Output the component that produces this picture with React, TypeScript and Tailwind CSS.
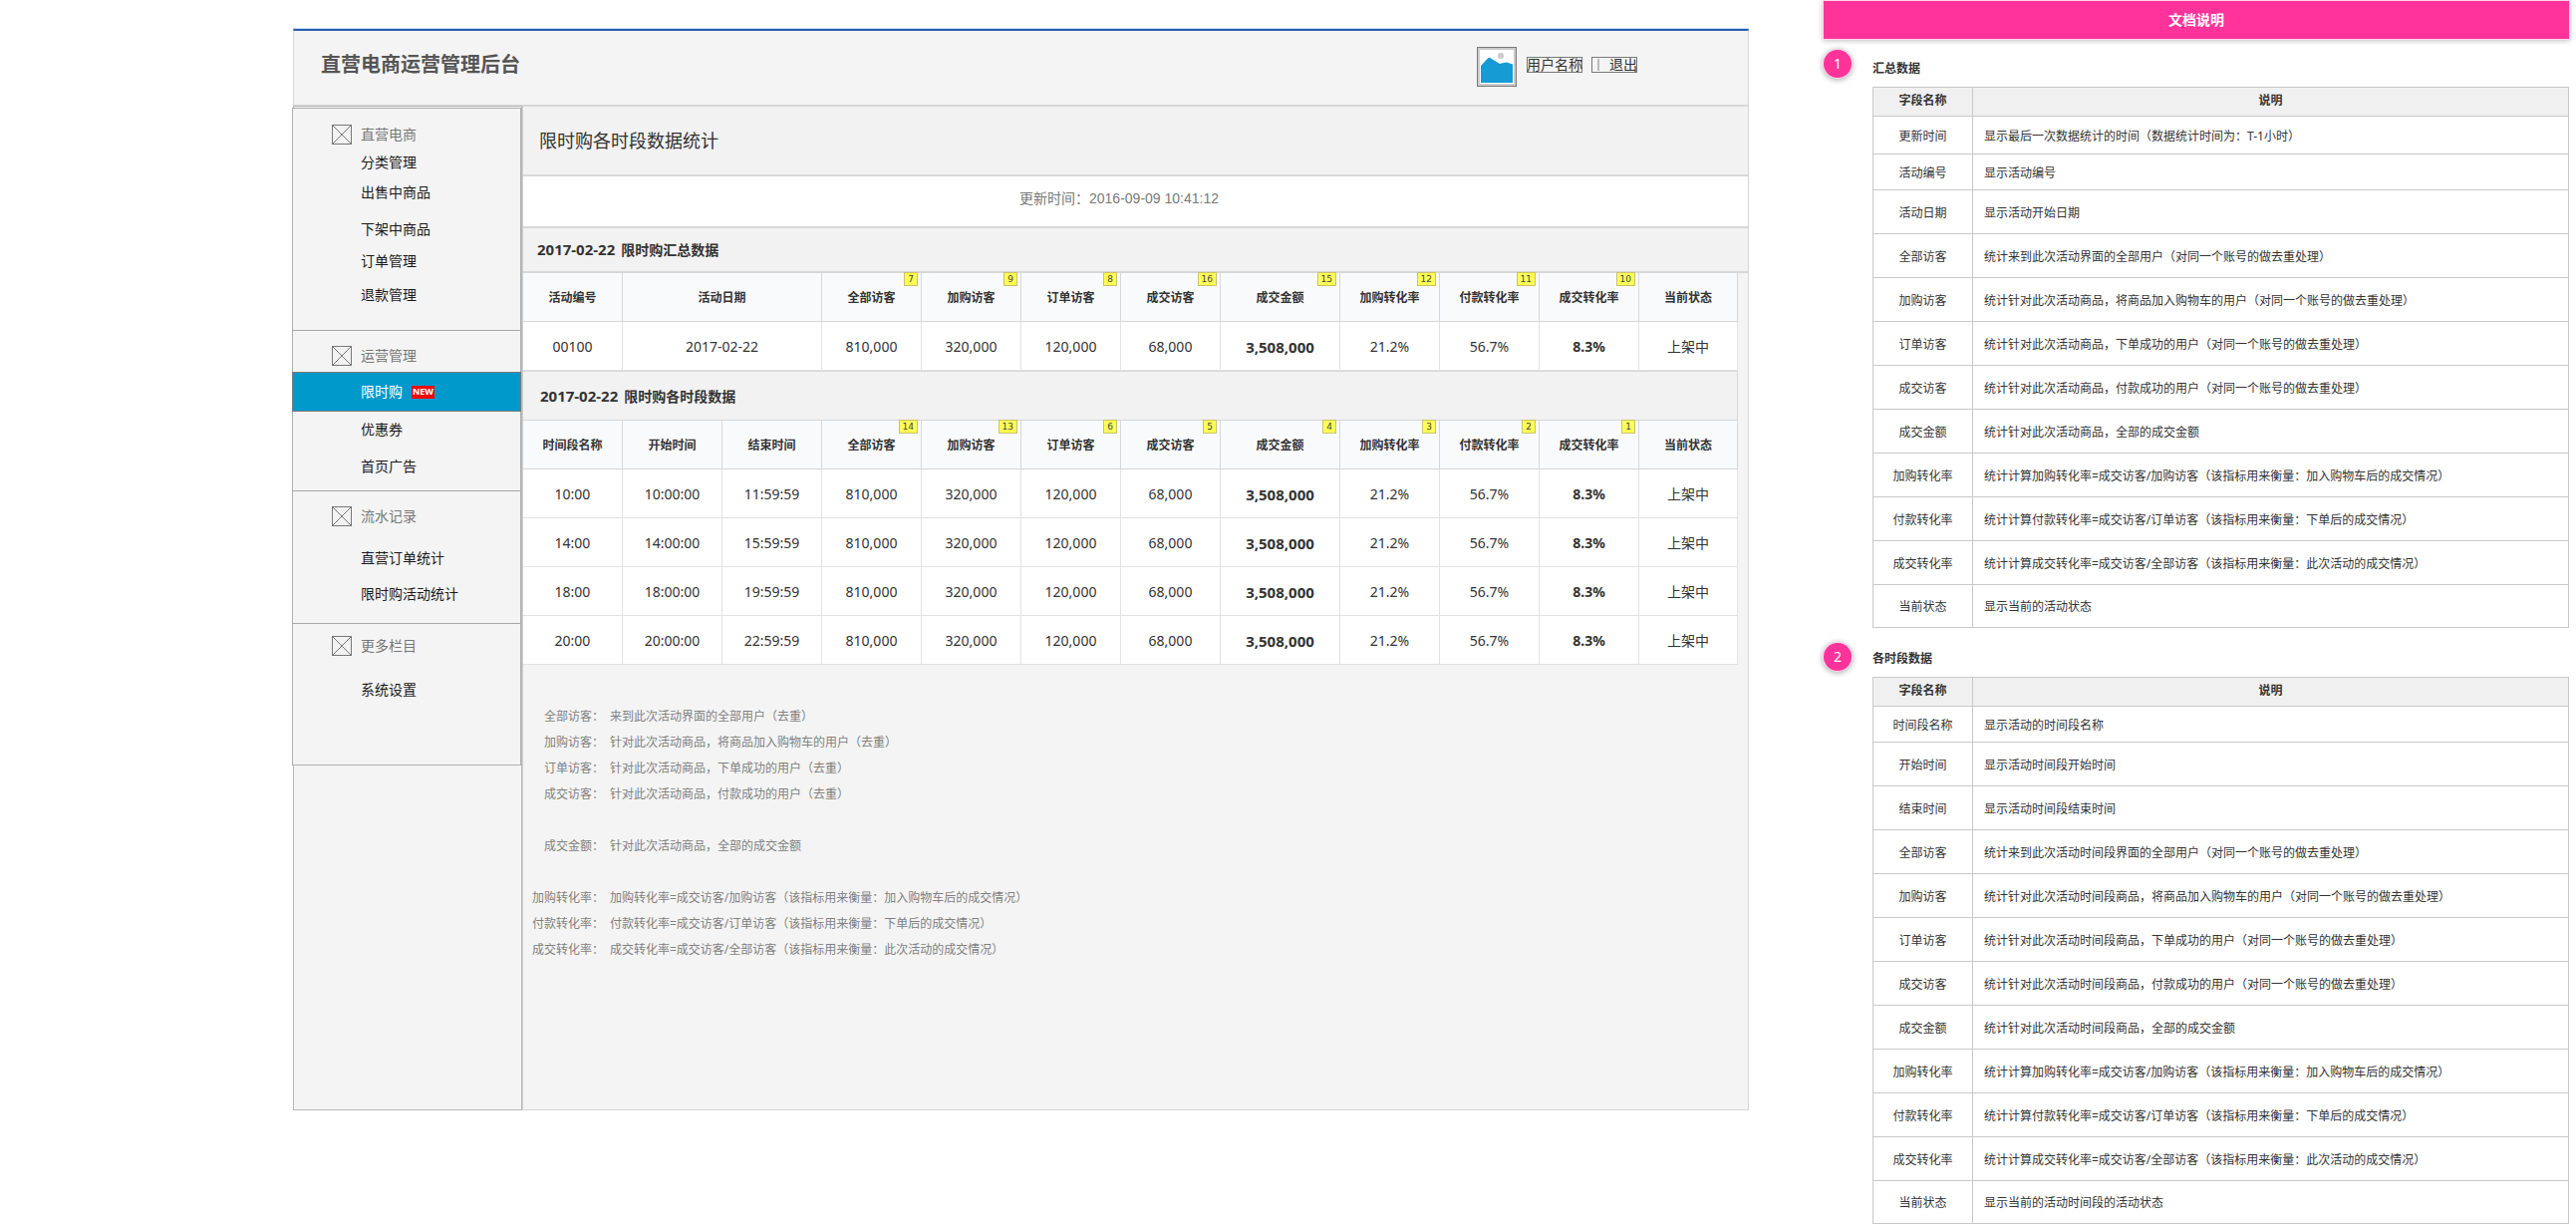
import React from 'react';

type MenuItem = { label: string; className: string; active?: boolean };
type MenuGroup = { title: string; className: string; items: MenuItem[] };

const MENU: MenuGroup[] = [
  {
    title: '直营电商',
    className: 'pt-4 pb-[25px]',
    items: [
      { label: '分类管理', className: 'mt-2' },
      { label: '出售中商品', className: 'mt-2.5' },
      { label: '下架中商品', className: 'mt-[17px]' },
      { label: '订单管理', className: 'mt-3' },
      { label: '退款管理', className: 'mt-3.5' },
    ],
  },
  {
    title: '运营管理',
    className: 'pt-[15px] pb-3.5',
    items: [
      { label: '限时购', className: 'mt-1.5', active: true },
      { label: '优惠券', className: 'mt-2' },
      { label: '首页广告', className: 'mt-[17px]' },
    ],
  },
  {
    title: '流水记录',
    className: 'pt-[15px] pb-[19px]',
    items: [
      { label: '直营订单统计', className: 'mt-[22px]' },
      { label: '限时购活动统计', className: 'mt-4' },
    ],
  },
  {
    title: '更多栏目',
    className: 'pt-3 pb-[65px]',
    items: [{ label: '系统设置', className: 'mt-6' }],
  },
];

type Column = { label: string; note?: number; width: number };

const SUMMARY_COLUMNS: Column[] = [
  { label: '活动编号', width: 100 },
  { label: '活动日期', width: 200 },
  { label: '全部访客', note: 7, width: 100 },
  { label: '加购访客', note: 9, width: 100 },
  { label: '订单访客', note: 8, width: 100 },
  { label: '成交访客', note: 16, width: 100 },
  { label: '成交金额', note: 15, width: 120 },
  { label: '加购转化率', note: 12, width: 100 },
  { label: '付款转化率', note: 11, width: 100 },
  { label: '成交转化率', note: 10, width: 100 },
  { label: '当前状态', width: 99 },
];

const PERIOD_COLUMNS: Column[] = [
  { label: '时间段名称', width: 100 },
  { label: '开始时间', width: 100 },
  { label: '结束时间', width: 100 },
  { label: '全部访客', note: 14, width: 100 },
  { label: '加购访客', note: 13, width: 100 },
  { label: '订单访客', note: 6, width: 100 },
  { label: '成交访客', note: 5, width: 100 },
  { label: '成交金额', note: 4, width: 120 },
  { label: '加购转化率', note: 3, width: 100 },
  { label: '付款转化率', note: 2, width: 100 },
  { label: '成交转化率', note: 1, width: 100 },
  { label: '当前状态', width: 99 },
];

const METRICS = ['810,000', '320,000', '120,000', '68,000', '3,508,000', '21.2%', '56.7%', '8.3%', '上架中'];

const SUMMARY_ROWS = [['00100', '2017-02-22', ...METRICS]];

const PERIOD_ROWS = [
  ['10:00', '10:00:00', '11:59:59', ...METRICS],
  ['14:00', '14:00:00', '15:59:59', ...METRICS],
  ['18:00', '18:00:00', '19:59:59', ...METRICS],
  ['20:00', '20:00:00', '22:59:59', ...METRICS],
];

const NOTES: [string, string][][] = [
  [
    ['全部访客：', '来到此次活动界面的全部用户（去重）'],
    ['加购访客：', '针对此次活动商品，将商品加入购物车的用户（去重）'],
    ['订单访客：', '针对此次活动商品，下单成功的用户（去重）'],
    ['成交访客：', '针对此次活动商品，付款成功的用户（去重）'],
  ],
  [['成交金额：', '针对此次活动商品，全部的成交金额']],
  [
    ['加购转化率：', '加购转化率=成交访客/加购访客（该指标用来衡量：加入购物车后的成交情况）'],
    ['付款转化率：', '付款转化率=成交访客/订单访客（该指标用来衡量：下单后的成交情况）'],
    ['成交转化率：', '成交转化率=成交访客/全部访客（该指标用来衡量：此次活动的成交情况）'],
  ],
];

type DocRow = { name: string; text: string; height: string };

const H36 = 'h-9';
const H38 = 'h-[38px]';
const H44 = 'h-11';
const H43 = 'h-[43px]';

const DOC_SUMMARY: DocRow[] = [
  { name: '更新时间', text: '显示最后一次数据统计的时间（数据统计时间为：T-1小时）', height: H38 },
  { name: '活动编号', text: '显示活动编号', height: H36 },
  { name: '活动日期', text: '显示活动开始日期', height: H44 },
  { name: '全部访客', text: '统计来到此次活动界面的全部用户（对同一个账号的做去重处理）', height: H44 },
  { name: '加购访客', text: '统计针对此次活动商品，将商品加入购物车的用户（对同一个账号的做去重处理）', height: H44 },
  { name: '订单访客', text: '统计针对此次活动商品，下单成功的用户（对同一个账号的做去重处理）', height: H44 },
  { name: '成交访客', text: '统计针对此次活动商品，付款成功的用户（对同一个账号的做去重处理）', height: H44 },
  { name: '成交金额', text: '统计针对此次活动商品，全部的成交金额', height: H44 },
  { name: '加购转化率', text: '统计计算加购转化率=成交访客/加购访客（该指标用来衡量：加入购物车后的成交情况）', height: H44 },
  { name: '付款转化率', text: '统计计算付款转化率=成交访客/订单访客（该指标用来衡量：下单后的成交情况）', height: H44 },
  { name: '成交转化率', text: '统计计算成交转化率=成交访客/全部访客（该指标用来衡量：此次活动的成交情况）', height: H44 },
  { name: '当前状态', text: '显示当前的活动状态', height: H43 },
];

const DOC_PERIOD: DocRow[] = [
  { name: '时间段名称', text: '显示活动的时间段名称', height: H36 },
  { name: '开始时间', text: '显示活动时间段开始时间', height: H44 },
  { name: '结束时间', text: '显示活动时间段结束时间', height: H44 },
  { name: '全部访客', text: '统计来到此次活动时间段界面的全部用户（对同一个账号的做去重处理）', height: H44 },
  { name: '加购访客', text: '统计针对此次活动时间段商品，将商品加入购物车的用户（对同一个账号的做去重处理）', height: H44 },
  { name: '订单访客', text: '统计针对此次活动时间段商品，下单成功的用户（对同一个账号的做去重处理）', height: H44 },
  { name: '成交访客', text: '统计针对此次活动时间段商品，付款成功的用户（对同一个账号的做去重处理）', height: H44 },
  { name: '成交金额', text: '统计针对此次活动时间段商品，全部的成交金额', height: H44 },
  { name: '加购转化率', text: '统计计算加购转化率=成交访客/加购访客（该指标用来衡量：加入购物车后的成交情况）', height: H44 },
  { name: '付款转化率', text: '统计计算付款转化率=成交访客/订单访客（该指标用来衡量：下单后的成交情况）', height: H44 },
  { name: '成交转化率', text: '统计计算成交转化率=成交访客/全部访客（该指标用来衡量：此次活动的成交情况）', height: H44 },
  { name: '当前状态', text: '显示当前的活动时间段的活动状态', height: H43 },
];

function CrossBox() {
  return (
    <svg width="20" height="20" viewBox="0 0 20 20" fill="none" stroke="#797979" className="shrink-0" aria-hidden="true">
      <rect x="0.5" y="0.5" width="19" height="19" fill="#f2f2f2" />
      <path d="M0.5 0.5L19.5 19.5M19.5 0.5L0.5 19.5" />
    </svg>
  );
}

function Avatar() {
  return (
    <svg width="40" height="40" viewBox="0 0 40 40" className="shrink-0" role="img" aria-label="用户头像">
      <rect x="0.5" y="0.5" width="39" height="39" fill="#cccccc" stroke="#797979" />
      <rect x="3" y="3" width="34" height="34" fill="#ffffff" />
      <circle cx="24" cy="9" r="3" fill="#cccccc" />
      <path d="M4 19L11 11.5Q12.5 10 14 11.5L23 17Q27 15.500 30 15.500L36 17.5V36H4Z" fill="#169bd5" />
    </svg>
  );
}

function Sidebar() {
  return (
    <aside className="-mt-px -mb-px -ml-px w-[230px] shrink-0 border border-[#b8b8b8] bg-[#f4f4f4] pt-px">
      <nav className="-ml-0.5 w-[230px] border border-[#b0b0b0] bg-[#f4f4f4]">
        {MENU.map((group, i) => (
          <section key={group.title} className={`${group.className} ${i > 0 ? 'border-t border-[#a6a6a6]' : ''}`}>
            <h2 className="flex h-5 items-center gap-[9px] pl-[39px] text-sm leading-5 text-[#777777]">
              <CrossBox />
              {group.title}
            </h2>
            <ul>
              {group.items.map((item) => (
                <li key={item.label} className={item.className}>
                  {item.active ? (
                    <a
                      href="#"
                      aria-current="page"
                      className="-mx-px flex h-10 items-center gap-[9px] border border-[#797979] bg-[#0099cc] pl-[68px] text-sm text-white"
                    >
                      {item.label}
                      <span className="flex h-[13px] w-[23px] items-center justify-center bg-[#ee0a0a] text-[9px] font-bold">NEW</span>
                    </a>
                  ) : (
                    <a href="#" className="block h-5 pl-[68px] text-sm leading-5 text-[#1a1a1a]">
                      {item.label}
                    </a>
                  )}
                </li>
              ))}
            </ul>
          </section>
        ))}
      </nav>
    </aside>
  );
}

function StatsTable({ label, columns, rows }: { label: string; columns: Column[]; rows: string[][] }) {
  return (
    <table aria-label={label} className="w-full table-fixed border-separate border-spacing-0 text-center text-[#333333]">
      <colgroup>
        {columns.map((c) => (
          <col key={c.label} style={{ width: c.width }} />
        ))}
      </colgroup>
      <thead>
        <tr>
          {columns.map((c) => (
            <th
              key={c.label}
              scope="col"
              className="relative h-[49px] border-r border-b border-[#d7d7d7] bg-[#f9fafc] p-0 pt-0.5 text-xs font-bold"
            >
              {c.label}
              {c.note !== undefined && (
                <span className="absolute -top-px right-[3px] flex h-3.5 items-center border border-[#c9c36a] bg-[#ffff55] px-[3px] font-['DejaVu_Sans'] text-[9px] font-normal text-[#444444]">
                  {c.note}
                </span>
              )}
            </th>
          ))}
        </tr>
      </thead>
      <tbody>
        {rows.map((row) => (
          <tr key={row[0]}>
            {row.map((value, i) => {
              const name = columns[i].label;
              const tone = name === '成交金额' ? 'text-[15px] font-bold' : name === '成交转化率' ? 'text-sm font-bold' : 'text-sm';
              return (
                <td key={name} className={`h-[49px] border-r border-b border-[#e2e2e2] bg-white p-0 pt-0.5 ${tone}`}>
                  {value}
                </td>
              );
            })}
          </tr>
        ))}
      </tbody>
    </table>
  );
}

type DocSectionProps = { index: number; title: string; rows: DocRow[]; headingClassName: string };

function DocSection({ index, title, rows, headingClassName }: DocSectionProps) {
  return (
    <section className="flex items-start">
      <div className="flex w-[49px] shrink-0">
        <span className="flex size-7 items-center justify-center rounded-full bg-[#ff3399] text-sm text-white shadow-[0_0_0_1px_#ffd6eb,0_1px_5px_2px_rgba(0,0,0,0.25)]">
          {index}
        </span>
      </div>
      <div className="min-w-0 flex-1">
        <h2 className={`pb-2 text-xs leading-5 font-bold text-[#333333] ${headingClassName}`}>{title}</h2>
        <table
          aria-label={title}
          className="w-full table-fixed border-separate border-spacing-0 border-t border-l border-[#c9c9c9] text-xs text-[#333333]"
        >
          <colgroup>
            <col className="w-[100px]" />
            <col />
          </colgroup>
          <thead>
            <tr className="h-[29px] bg-[#f0f0f0]">
              <th scope="col" className="border-r border-b border-[#c9c9c9] p-0 pb-0.5 font-bold">
                字段名称
              </th>
              <th scope="col" className="border-r border-b border-[#c9c9c9] p-0 pb-0.5 font-bold">
                说明
              </th>
            </tr>
          </thead>
          <tbody>
            {rows.map((row) => (
              <tr key={row.name} className={row.height}>
                <td className="border-r border-b border-[#c9c9c9] p-0 pt-0.5 text-center">{row.name}</td>
                <td className="border-r border-b border-[#c9c9c9] p-0 pt-0.5 pl-[11px]">{row.text}</td>
              </tr>
            ))}
          </tbody>
        </table>
      </div>
    </section>
  );
}

export default function App() {
  return (
    <div className="grid grid-cols-[1462fr_748fr] items-start gap-x-[75px] bg-white pr-[7px] pl-[293px] font-['Noto_Sans','Noto_Sans_CJK_SC',sans-serif]">
      <div className="mt-[29px] ml-px border-x border-b border-[#d7d7d7] bg-[#f4f4f4]">
        <header className="-mx-px flex h-[78px] items-center justify-between border-t-2 border-r border-b-2 border-l border-x-[#d7d7d7] border-t-[#2a5fb4] border-b-[#d7d7d7] pr-[111px] pb-[3px] pl-[27px] shadow-[0_-1px_0_#bfe0f5]">
          <h1 className="pb-1 text-xl font-bold text-[#555555]">直营电商运营管理后台</h1>
          <div className="flex items-center text-sm leading-[14px] text-[#333333]">
            <Avatar />
            <a href="#" className="-mt-1 ml-2.5 border border-[#797979]">
              <span className="-mx-px block">用户名称</span>
            </a>
            <button type="button" className="-mt-1 ml-[9px] flex items-center border border-[#797979]">
              <span className="ml-[5px] h-3 w-0.5 bg-[#bbbbbb]" />
              <span className="-mr-px pl-2.5">退出</span>
            </button>
          </div>
        </header>

        <div className="flex">
          <Sidebar />
          <main className="min-w-0 flex-1 border-l border-[#d0d0d0] pb-[147px]">
            <div className="flex h-[70px] items-center border-b-2 border-[#d7d7d7] bg-[#f2f2f2] pl-4">
              <h2 className="text-lg text-[#333333]">限时购各时段数据统计</h2>
            </div>
            <p className="flex h-[52px] items-center justify-center border-b-2 border-[#d7d7d7] bg-white pr-[33px] pb-[7px] font-['Liberation_Sans','Noto_Sans_CJK_SC',sans-serif] text-sm text-[#797979]">
              更新时间：2016-09-09 10:41:12
            </p>
            <h3 className="flex h-[45px] items-center border-b-2 border-[#d7d7d7] bg-[#f2f2f2] pl-3.5 text-sm font-bold text-[#333333]">
              <span className="mr-1.5 text-[15px]">2017-02-22</span>限时购汇总数据
            </h3>
            <div className="mr-2.5">
              <StatsTable label="限时购汇总数据" columns={SUMMARY_COLUMNS} rows={SUMMARY_ROWS} />
              <h3 className="flex h-[50px] items-center border-y border-r border-[#d7d7d7] bg-[#f2f2f2] pt-0.5 pl-[17px] text-sm font-bold text-[#333333]">
                <span className="mr-1.5 text-[15px]">2017-02-22</span>限时购各时段数据
              </h3>
              <StatsTable label="限时购各时段数据" columns={PERIOD_COLUMNS} rows={PERIOD_ROWS} />
            </div>

            <div className="mt-[39px] flex flex-col gap-[26px] text-xs leading-[26px] text-[#808080]">
              {NOTES.map((block) => (
                <dl key={block[0][0]} className="grid grid-cols-[81px_1fr] gap-x-1.5">
                  {block.map(([term, text]) => (
                    <React.Fragment key={term}>
                      <dt className="text-right">{term}</dt>
                      <dd>{text}</dd>
                    </React.Fragment>
                  ))}
                </dl>
              ))}
            </div>
          </main>
        </div>
      </div>

      <aside className="pt-px">
        <h2 className="flex h-[38px] items-center justify-center bg-[#ff3399] text-sm font-bold text-white shadow-[0_0_0_1px_#ffd6eb,0_1px_5px_1px_rgba(0,0,0,0.25)]">
          文档说明
        </h2>
        <div className="mt-[11px] flex flex-col gap-[15px]">
          <DocSection index={1} title="汇总数据" rows={DOC_SUMMARY} headingClassName="pt-[9px]" />
          <DocSection index={2} title="各时段数据" rows={DOC_PERIOD} headingClassName="pt-1.5" />
        </div>
      </aside>
    </div>
  );
}
